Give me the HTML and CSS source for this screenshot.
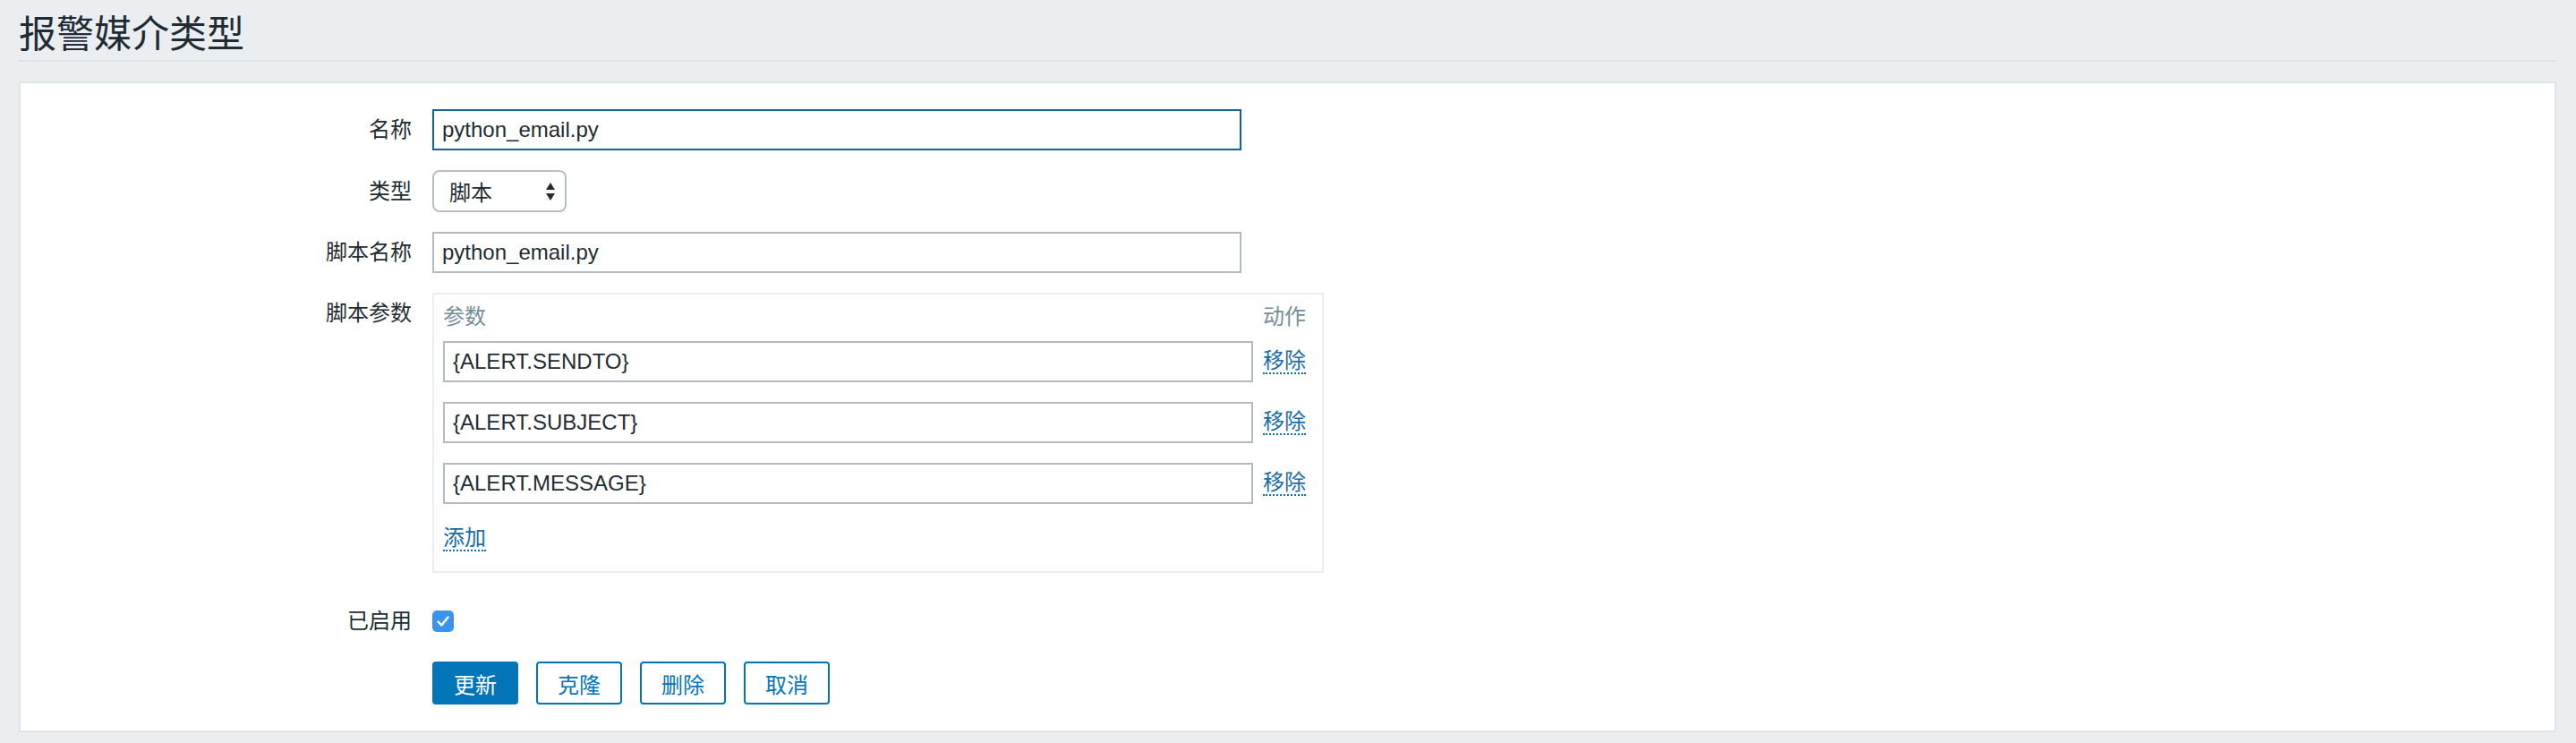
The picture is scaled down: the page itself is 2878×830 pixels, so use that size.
FILE: index.html
```html
<!DOCTYPE html>
<html lang="zh-CN">
<head>
    <meta charset="UTF-8">
    <title>报警媒介类型</title>
    <link rel="stylesheet" href="styles.css">
</head>
<body>
    <!-- 标题 -->
    <div class="header">
        <h1>报警媒介类型</h1>
    </div>
    <!-- 表单 -->
    <div class="card">
        <div class="form">
            <label class="lbl">名称</label>
            <div class="ctrl"><input class="txt focus" type="text" value="python_email.py"></div>

            <label class="lbl">类型</label>
            <div class="ctrl">
                <div class="select">
                    <span>脚本</span>
                    <svg width="12" height="22" viewBox="0 0 12 22"><path d="M6 1L11 9H1Z" fill="#2b2b2b"/><path d="M6 21L11 13H1Z" fill="#2b2b2b"/></svg>
                </div>
            </div>

            <label class="lbl">脚本名称</label>
            <div class="ctrl"><input class="txt" type="text" value="python_email.py"></div>

            <label class="lbl top">脚本参数</label>
            <div class="ctrl">
                <div class="params">
                    <div class="th">参数</div>
                    <div class="th">动作</div>
                    <input class="txt wide" type="text" value="{ALERT.SENDTO}">
                    <div class="act"><a class="link">移除</a></div>
                    <input class="txt wide" type="text" value="{ALERT.SUBJECT}">
                    <div class="act"><a class="link">移除</a></div>
                    <input class="txt wide" type="text" value="{ALERT.MESSAGE}">
                    <div class="act"><a class="link">移除</a></div>
                    <div class="add"><a class="link">添加</a></div>
                </div>
            </div>

            <label class="lbl">已启用</label>
            <div class="ctrl">
                <span class="check"><svg width="24" height="24" viewBox="0 0 24 24"><path d="M6.5 12.5l3.8 4L17.5 7.5" fill="none" stroke="#fff" stroke-width="2.4" stroke-linecap="round" stroke-linejoin="round"/></svg></span>
            </div>

            <div></div>
            <div class="ctrl buttons">
                <button class="btn main">更新</button>
                <button class="btn">克隆</button>
                <button class="btn">删除</button>
                <button class="btn">取消</button>
            </div>
        </div>
    </div>
</body>
</html>
```

FILE: styles.css
```css
        body{
            margin: 0;
            background: #ebeef0;
            color: #1f2c33;
            font-family: "Liberation Sans", "Noto Sans CJK SC", sans-serif;
            font-size: 24px;
        }
        /* 标题栏 */
        .header{
            margin: 0 22px 0 20px;
            padding: 10px 0 7px 1px;
            border-bottom: 2px solid #dce2e6;
        }
        .header h1{
            margin: 0;
            font-size: 42px;
            font-weight: normal;
            line-height: 50px;
            font-family: "Noto Sans CJK SC", sans-serif;
        }
        .card{
            margin: 22px 22px 0 21px;
            background: #fff;
            border: 2px solid #dfe4e7;
            padding: 29px 0 29px;
        }
        /* 表单：左侧标签 + 右侧控件 */
        .form{
            display: grid;
            grid-template-columns: 437px 1fr;
            column-gap: 23px;
            row-gap: 22px;
        }
        .lbl{
            text-align: right;
            line-height: 46px;
            align-self: center;
        }
        .lbl.top{
            align-self: start;
        }
        .ctrl{
            display: flex;
            align-items: center;
        }
        .txt{
            box-sizing: border-box;
            width: 904px;
            height: 46px;
            padding: 0 9px;
            border: 2px solid #b4babd;
            font: inherit;
            color: #1f2c33;
            background: #fff;
            outline: none;
        }
        .txt.focus{
            border-color: #0d6495;
        }
        .txt.wide{
            width: 905px;
        }
        .select{
            box-sizing: border-box;
            width: 150px;
            height: 47px;
            border: 2px solid #b9bec1;
            border-radius: 8px;
            display: flex;
            align-items: center;
            justify-content: space-between;
            padding: 0 10px 0 17px;
            font-family: "Noto Sans CJK SC", sans-serif;
        }
        /* 脚本参数表格 */
        .params{
            display: grid;
            grid-template-columns: 905px 1fr;
            column-gap: 11px;
            row-gap: 22px;
            width: 996px;
            box-sizing: border-box;
            border: 2px solid #ebeef0;
            padding: 11px 10px 20px 10px;
            margin-bottom: 9px;
        }
        .th{
            color: #768d99;
            line-height: 28px;
            margin-bottom: -9px;
        }
        .act{
            display: flex;
            align-items: center;
        }
        .add{
            grid-column: 1 / 3;
            height: 33px;
            display: flex;
            align-items: center;
        }
        .link{
            color: #1a6ca8;
            line-height: 26px;
            border-bottom: 2px dotted #1a6ca8;
            cursor: pointer;
        }
        .check{
            width: 24px;
            height: 24px;
            border-radius: 5px;
            background: #3b93f0;
            display: block;
        }
        .check svg{
            display: block;
        }
        .buttons{
            gap: 20px;
        }
        .btn{
            box-sizing: border-box;
            width: 96px;
            height: 48px;
            border: 2px solid #0275b8;
            border-radius: 4px;
            background: #fff;
            color: #0275b8;
            font: inherit;
            padding: 0;
        }
        .btn.main{
            background: #0275b8;
            color: #fff;
        }
```
